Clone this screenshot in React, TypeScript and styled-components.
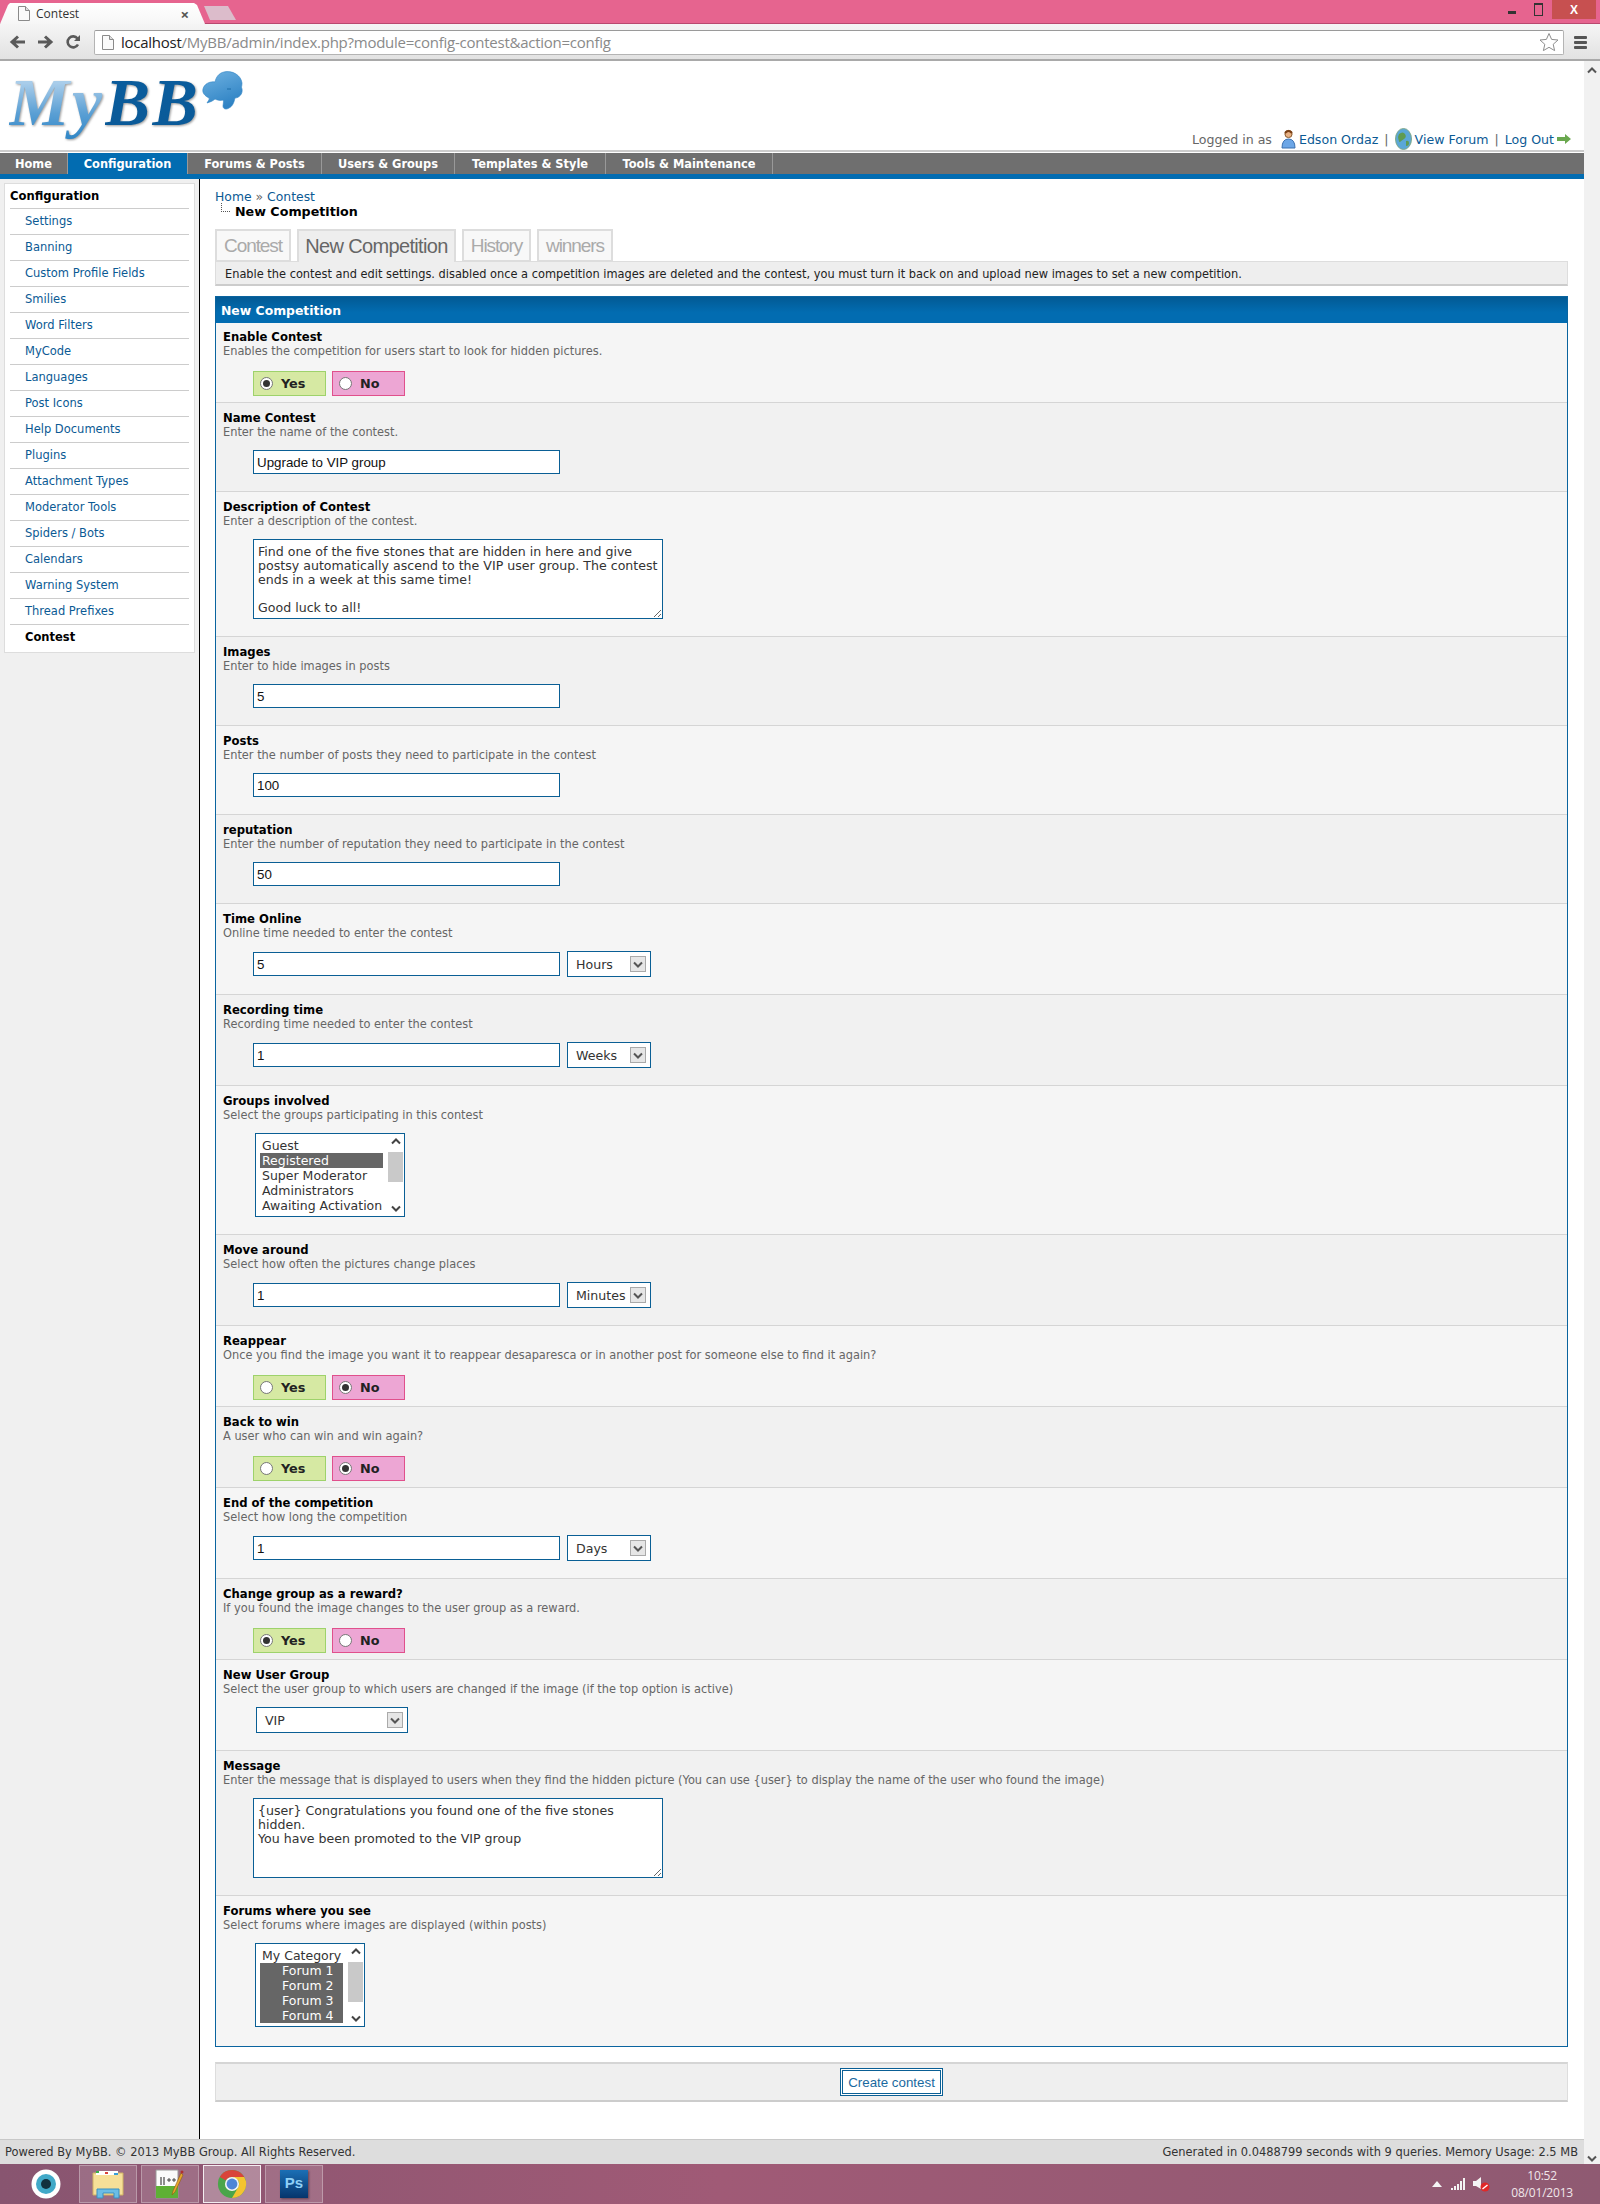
import React from 'react';
import styled, { createGlobalStyle } from 'styled-components';

const GlobalStyle = createGlobalStyle`
  html, body {
    margin: 0;
    padding: 0;
    height: 100%;
    overflow: hidden;
    background: #fff;
  }
  body {
    font-family: "DejaVu Sans", Verdana, sans-serif;
    font-size: 11.38px;
    color: #333;
  }
`;

const Screen = styled.div`
  width: 1600px;
  height: 2204px;
  display: flex;
  flex-direction: column;
  overflow: hidden;
`;

/* browser chrome */
const TitleBar = styled.div`
  height: 24px;
  flex: none;
  background: #e6648f;
  box-shadow: inset 0 -1px 0 #b9486f;
  display: flex;
  align-items: flex-end;
  justify-content: space-between;
`;

const TabStrip = styled.div`
  display: flex;
  align-items: flex-end;
`;

const BrowserTab = styled.div`
  width: 205px;
  height: 21px;
  box-sizing: border-box;
  background: linear-gradient(#fff, #f6f6f6);
  clip-path: polygon(0 100%, 8px 2px, 10px 0, 194px 0, 197px 2px, 205px 100%);
  padding: 0 16px 0 18px;
  display: flex;
  align-items: center;
  gap: 6px;
  font-family: "Open Sans", sans-serif;
  font-size: 12px;
  color: #333;
`;

const TabTitle = styled.span`
  flex: 1;
`;

const TabClose = styled.span`
  font-size: 15px;
  font-weight: 700;
  color: #555;
`;

const NewTabButton = styled.div`
  width: 32px;
  height: 14px;
  margin: 0 0 4px -1px;
  background: #dcbccb;
  clip-path: polygon(0 0, 24px 0, 32px 100%, 6px 100%);
`;

const WindowControls = styled.div`
  align-self: flex-start;
  display: flex;
  align-items: center;
  margin-right: 4px;
`;

const MinimizeMark = styled.span`
  width: 8px;
  height: 3px;
  background: #333;
  margin: 6px 18px 0 0;
`;

const RestoreMark = styled.span`
  width: 7px;
  height: 10px;
  border: 1px solid #333;
  border-top-width: 2px;
  margin-right: 9px;
`;

const CloseControl = styled.div`
  width: 44px;
  height: 19px;
  background: #c75050;
  color: #fff;
  font-family: "Liberation Sans", sans-serif;
  font-size: 12px;
  font-weight: 700;
  display: flex;
  align-items: center;
  justify-content: center;
`;

const Toolbar = styled.div`
  height: 37px;
  flex: none;
  box-sizing: border-box;
  background: linear-gradient(#f5f5f5, #e2e2e2);
  border-bottom: 2px solid #a9a9a9;
  display: flex;
  align-items: center;
  padding: 1px 9px 0 9px;
`;

const NavButtons = styled.div`
  width: 85px;
  display: flex;
  gap: 11px;
  align-items: center;
`;

const Omnibox = styled.div`
  width: 1470px;
  height: 25px;
  box-sizing: border-box;
  background: #fff;
  border: 1px solid #b4b4b4;
  border-top-color: #9a9a9a;
  border-radius: 2px;
  display: flex;
  align-items: center;
  padding: 0 4px 0 7px;
  gap: 7px;
  font-family: "Open Sans", sans-serif;
  font-size: 15px;
  letter-spacing: -0.25px;
  color: #8a8a8a;
`;

const Address = styled.span`
  flex: 1;
  white-space: nowrap;
`;

const Host = styled.span`
  color: #222;
`;

const Hamburger = styled.div`
  margin-left: 10px;
  width: 13px;
  display: flex;
  flex-direction: column;
  gap: 2px;
  span {
    height: 3px;
    background: #555;
    border-radius: 1px;
  }
`;

/* page */
const MainArea = styled.div`
  flex: 1;
  min-height: 0;
  display: flex;
`;

const Page = styled.div`
  flex: 1;
  min-width: 0;
  display: flex;
  flex-direction: column;
`;

const ScrollBar = styled.div`
  width: 16px;
  flex: none;
  background: #f1f1f1;
  display: flex;
  flex-direction: column;
  justify-content: space-between;
  align-items: center;
  padding: 6px 0 2px;
  color: #555;
`;

const Header = styled.div`
  height: 91px;
  flex: none;
  box-sizing: border-box;
  border-bottom: 2px solid #ccc;
  display: flex;
  justify-content: space-between;
  align-items: flex-end;
  padding: 0 13px 0 9px;
`;

const Logo = styled.div`
  align-self: flex-start;
  display: flex;
  align-items: flex-start;
`;

const LogoText = styled.div`
  font-family: "Liberation Serif", serif;
  font-style: italic;
  font-weight: 700;
  font-size: 68px;
  line-height: 68px;
  margin-top: 7px;
  letter-spacing: 2.5px;
  filter: drop-shadow(1px 1px 1px rgba(70, 70, 70, 0.55));
`;

const LogoPart = styled.span<{ $dark?: boolean }>`
  background: ${(p) =>
    p.$dark
      ? 'linear-gradient(#0a5c9c 30%, #0b5a98 90%)'
      : 'linear-gradient(#a9cdea 25%, #5a9fd4 65%, #2f86c6 100%)'};
  -webkit-background-clip: text;
  background-clip: text;
  color: transparent;
`;

const LogoBubble = styled.svg`
  margin: 10px 0 0 2px;
`;

const UserLinks = styled.div`
  display: flex;
  align-items: center;
  gap: 3px;
  font-size: 12.6px;
  height: 22px;
  color: #666;
  white-space: nowrap;
`;

const PlainLink = styled.a`
  color: #0b5a94;
  text-decoration: none;
`;

const LoggedAs = styled.span`
  margin-right: 6px;
`;

const Pipe = styled.span`
  margin: 0 3px;
`;

const NavBar = styled.div`
  flex: none;
  margin-top: 1px;
  height: 21px;
  background: #6f6f6f;
  border-bottom: 5px solid #026cb1;
  display: flex;
`;

const NavItem = styled.a<{ $active?: boolean; $width: number }>`
  width: ${(p) => p.$width}px;
  box-sizing: border-box;
  text-align: center;
  line-height: 23px;
  font-weight: 700;
  font-size: 11.4px;
  color: #fff;
  background: ${(p) => (p.$active ? '#026cb1' : 'transparent')};
  border-right: 1px solid #999;
`;

const Body = styled.div`
  flex: 1;
  min-height: 0;
  display: flex;
`;

const SideColumn = styled.div`
  width: 200px;
  flex: none;
  box-sizing: border-box;
  background: #f0f0f0;
  border-right: 1px solid #000;
  padding: 4px 4px 0;
  margin-right: 1px;
`;

const SideMenu = styled.div`
  background: #fff;
  border: 1px solid #ddd;
  padding: 0 5px 5px;
  height: 470px;
  box-sizing: border-box;
`;

const SideTitle = styled.div`
  height: 24px;
  line-height: 25px;
  font-size: 11.6px;
  font-weight: 700;
  color: #000;
  border-bottom: 1px solid #ccc;
`;

const SideItem = styled.div<{ $current?: boolean }>`
  height: 26px;
  box-sizing: border-box;
  line-height: 25px;
  font-size: 11.5px;
  padding-left: 15px;
  border-bottom: ${(p) => (p.$current ? '0' : '1px solid #ccc')};
  color: ${(p) => (p.$current ? '#000' : '#0b5a94')};
  font-weight: ${(p) => (p.$current ? 700 : 400)};
`;

const Content = styled.div`
  flex: 1;
  min-width: 0;
  padding: 11px 16px 0 14px;
`;

const Crumbs = styled.div`
  height: 14px;
  line-height: 14px;
  font-size: 12.4px;
  color: #666;
`;

const CrumbCurrent = styled.div`
  height: 15px;
  line-height: 16px;
  font-size: 12.7px;
  font-weight: 700;
  color: #000;
  padding-left: 20px;
  position: relative;
  &::before {
    content: '';
    position: absolute;
    left: 6px;
    top: -1px;
    width: 8px;
    height: 8px;
    border-left: 1px dotted #555;
    border-bottom: 1px dotted #555;
  }
`;

const Tabs = styled.div`
  display: flex;
  gap: 6px;
  margin-top: 10px;
  height: 33px;
`;

const TabLink = styled.div<{ $active?: boolean; $width: number }>`
  width: ${(p) => p.$width}px;
  box-sizing: border-box;
  text-align: center;
  background: ${(p) => (p.$active ? '#eee' : '#f8f8f8')};
  border: 2px solid #ddd;
  border-bottom: ${(p) => (p.$active ? '0' : '2px solid #ddd')};
  font-family: "Liberation Sans", sans-serif;
  font-size: ${(p) => (p.$active ? 20 : 19)}px;
  letter-spacing: ${(p) => (p.$active ? -0.65 : -1.1)}px;
  line-height: 30px;
  color: ${(p) => (p.$active ? '#666' : '#aaa')};
  position: relative;
  z-index: 1;
`;

const TabDescription = styled.div`
  height: 25px;
  box-sizing: border-box;
  background: #eee;
  border: 1px solid #ddd;
  border-bottom: 2px solid #ccc;
  margin-top: -1px;
  padding-left: 9px;
  line-height: 24px;
  color: #222;
`;

const Panel = styled.div`
  margin-top: 10px;
  border: 1px solid #0a649f;
  background: #f5f5f5;
`;

const PanelHead = styled.div`
  height: 26px;
  background: linear-gradient(#025a94, #026cb1 60%);
  color: #fff;
  font-weight: 700;
  font-size: 12.4px;
  line-height: 27px;
  padding-left: 5px;
`;

const Row = styled.div<{ $alt: boolean; $first?: boolean; $last?: boolean }>`
  box-sizing: border-box;
  padding: ${(p) => (p.$first ? 7 : 8)}px 7px 0;
  background: ${(p) => (p.$alt ? '#f1f1f1' : '#f5f5f5')};
  border-bottom: ${(p) => (p.$last ? '0' : '1px solid #d5d5d5')};
`;

const Label = styled.div`
  font-weight: 700;
  font-size: 11.65px;
  line-height: 14px;
  color: #000;
`;

const Hint = styled.div`
  line-height: 14px;
  color: #666;
`;

const FieldRow = styled.div<{ $radio?: boolean; $last?: boolean }>`
  display: flex;
  align-items: center;
  gap: ${(p) => (p.$radio ? 6 : 7)}px;
  margin-top: ${(p) => (p.$radio ? 13 : 11)}px;
  padding-bottom: ${(p) => (p.$radio ? 6 : p.$last ? 19 : 17)}px;
  margin-left: 30px;
`;

const TextInput = styled.input`
  width: 307px;
  height: 24px;
  box-sizing: border-box;
  border: 1px solid #0a5f95;
  outline: 0;
  padding: 0 3px;
  background: #fff;
  font-family: "Liberation Sans", Arial, sans-serif;
  font-size: 13.33px;
  color: #111;
`;

const TextArea = styled.textarea`
  display: block;
  width: 410px;
  height: 80px;
  box-sizing: border-box;
  border: 1px solid #0a5f95;
  outline: 0;
  padding: 5px 4px 3px;
  margin: 0;
  background: #fff;
  font-family: "DejaVu Sans", Verdana, sans-serif;
  font-size: 12.6px;
  line-height: 14px;
  color: #333;
  overflow: hidden;
  resize: both;
`;

const SelectBox = styled.div<{ $width: number }>`
  width: ${(p) => p.$width}px;
  height: 26px;
  box-sizing: border-box;
  background: #fff;
  border: 1px solid #0a5f95;
  display: flex;
  align-items: center;
  justify-content: space-between;
  padding: 0 4px 0 8px;
  font-size: 12.6px;
  color: #333;
`;

const SelectArrow = styled.span`
  width: 16px;
  height: 16px;
  box-sizing: border-box;
  background: #e6e6e6;
  border: 1px solid #aaa;
  display: flex;
  align-items: center;
  justify-content: center;
  color: #555;
`;

const RadioChoice = styled.label<{ $yes?: boolean }>`
  width: 73px;
  height: 25px;
  box-sizing: border-box;
  background: ${(p) => (p.$yes ? '#d6e9a3' : '#eda6d4')};
  border: 1px solid ${(p) => (p.$yes ? '#9ed26b' : '#e0508c')};
  display: flex;
  align-items: center;
  padding-left: 6px;
  gap: 8px;
  font-size: 12.8px;
  font-weight: 700;
  color: #222;
`;

const RadioDot = styled.span<{ $on?: boolean }>`
  width: 13px;
  height: 13px;
  box-sizing: border-box;
  border-radius: 50%;
  border: 1px solid #777;
  background: #fff;
  display: flex;
  align-items: center;
  justify-content: center;
  &::after {
    content: '';
    width: 7px;
    height: 7px;
    border-radius: 50%;
    background: ${(p) => (p.$on ? '#333' : 'transparent')};
  }
`;

const ListBox = styled.div<{ $width: number }>`
  width: ${(p) => p.$width}px;
  height: 84px;
  box-sizing: border-box;
  margin-left: 2px;
  background: #fff;
  border: 1px solid #0a5f95;
  display: flex;
  padding: 4px 1px 4px 4px;
`;

const ListOptions = styled.div`
  flex: 1;
  margin-right: 5px;
`;

const ListOption = styled.div<{ $selected?: boolean; $indent?: boolean }>`
  height: 15px;
  line-height: 15px;
  font-size: 12.5px;
  white-space: nowrap;
  overflow: hidden;
  padding-left: ${(p) => (p.$indent ? 22 : 2)}px;
  background: ${(p) => (p.$selected ? '#666' : 'transparent')};
  color: ${(p) => (p.$selected ? '#fff' : '#333')};
`;

const ListScroll = styled.div`
  width: 15px;
  margin: -3px 0 -3px;
  background: #fff;
  display: flex;
  flex-direction: column;
  align-items: center;
  justify-content: space-between;
  position: relative;
  color: #444;
  padding: 3px 0;
`;

const ListThumb = styled.div<{ $height: number }>`
  position: absolute;
  left: 0;
  right: 0;
  top: 17px;
  height: ${(p) => p.$height}px;
  background: #c9c9c9;
`;

const FormButtons = styled.div`
  margin-top: 15px;
  height: 40px;
  box-sizing: border-box;
  background: #efefef;
  border: 1px solid #ddd;
  border-top: 2px solid #d5d5d5;
  border-bottom: 2px solid #ccc;
  display: flex;
  align-items: center;
  justify-content: center;
`;

const SubmitButton = styled.button`
  width: 103px;
  height: 28px;
  padding: 0;
  background: #fff;
  border: 1px solid #0a5f95;
  box-shadow: inset 0 0 0 1px #fff, inset 0 0 0 2px #0a5f95;
  font-family: "Liberation Sans", Arial, sans-serif;
  font-size: 13.33px;
  color: #1a6aa0;
`;

const Footer = styled.div`
  height: 25px;
  flex: none;
  box-sizing: border-box;
  background: #ddd;
  border-top: 1px solid #c8c8c8;
  display: flex;
  justify-content: space-between;
  align-items: center;
  padding: 0 6px 0 5px;
  font-size: 11.45px;
  color: #333;
`;

/* taskbar */
const TaskBar = styled.div`
  height: 40px;
  flex: none;
  background: linear-gradient(90deg, #885570, #a05a76 45%, #8f5a72);
  display: flex;
  align-items: center;
  justify-content: space-between;
  padding-right: 27px;
`;

const TaskIcons = styled.div`
  display: flex;
  gap: 4px;
  align-items: center;
`;

const StartOrb = styled.div`
  width: 75px;
  display: flex;
  justify-content: center;
  padding-left: 17px;
  box-sizing: border-box;
`;

const TaskSlot = styled.div<{ $active?: boolean }>`
  width: 58px;
  height: 38px;
  box-sizing: border-box;
  background: ${(p) => (p.$active ? 'rgba(255,255,255,.3)' : 'rgba(255,255,255,.14)')};
  border: 1px solid ${(p) => (p.$active ? 'rgba(255,255,255,.85)' : 'rgba(255,255,255,.3)')};
  display: flex;
  align-items: center;
  justify-content: center;
`;

const PsBadge = styled.div`
  width: 28px;
  height: 28px;
  background: linear-gradient(#1b6fb5, #06356c);
  color: #8fd0f7;
  font-family: "Liberation Sans", sans-serif;
  font-weight: 700;
  font-size: 15px;
  line-height: 26px;
  text-align: center;
  box-shadow: 1px 1px 2px rgba(0, 0, 0, 0.4);
`;

const Tray = styled.div`
  display: flex;
  align-items: center;
  gap: 6px;
`;

const TrayArrow = styled.svg`
  margin-right: 3px;
`;

const Clock = styled.div`
  margin-left: 14px;
  text-align: center;
  font-family: "Open Sans", sans-serif;
  font-size: 12px;
  line-height: 17px;
  color: #f0e6ea;
  letter-spacing: -0.2px;
`;

const DownChevron = () => (
  <svg width="10" height="7" viewBox="0 0 10 7">
    <path d="M1 1.5 5 5.5 9 1.5" fill="none" stroke="currentColor" strokeWidth="2" />
  </svg>
);

const UpChevron = () => (
  <svg width="10" height="7" viewBox="0 0 10 7">
    <path d="M1 5.5 5 1.5 9 5.5" fill="none" stroke="currentColor" strokeWidth="2" />
  </svg>
);

const ArrowIcon = ({ flip }: { flip?: boolean }) => (
  <svg width="17" height="16" viewBox="0 0 17 16" style={flip ? { transform: 'scaleX(-1)' } : undefined}>
    <path d="M1 8h12M8 2.5 14 8l-6 5.5" fill="none" stroke="#5a5a5a" strokeWidth="3" />
  </svg>
);

const ReloadIcon = () => (
  <svg width="16" height="16" viewBox="0 0 16 16">
    <path d="M13 10.5A5.5 5.5 0 1 1 12.5 4.5" fill="none" stroke="#5a5a5a" strokeWidth="2.6" />
    <path d="M15 1v6H9z" fill="#5a5a5a" />
  </svg>
);

const PageIcon = () => (
  <svg width="12" height="15" viewBox="0 0 12 15">
    <path d="M.5.5h7l4 4v10H.5z" fill="#fafafa" stroke="#8a8a8a" />
    <path d="M7.5.5v4h4" fill="#ddd" stroke="#8a8a8a" />
  </svg>
);

const StarIcon = () => (
  <svg width="20" height="20" viewBox="0 0 20 20">
    <path d="M10 1.5 12.6 7.4l6.4.6-4.8 4.3 1.4 6.3L10 15.3 4.4 18.6l1.4-6.3L1 8l6.4-.6z" fill="#fff" stroke="#8d8d8d" />
  </svg>
);

const UserIcon = () => (
  <svg width="15" height="20" viewBox="0 0 15 20">
    <circle cx="7.5" cy="5" r="3.6" fill="#e8b184" stroke="#8a5a2b" />
    <path d="M4 4q3.500-4 7 0" fill="none" stroke="#7a3f14" strokeWidth="2" />
    <path d="M1 19q0-9 6.500-9t6.500 9z" fill="#6ca6e6" stroke="#3b70b0" />
  </svg>
);

const GlobeIcon = () => (
  <svg width="17" height="22" viewBox="0 0 17 22">
    <ellipse cx="8.500" cy="11" rx="8" ry="10.500" fill="#5aa7d8" stroke="#7fa98a" />
    <path d="M4 6q4-3 6 0t-1 5-4 3-2-5zM11 13q3-1 3 2t-3 3z" fill="#5f9b52" />
  </svg>
);

const GreenArrow = () => (
  <svg width="14" height="10" viewBox="0 0 14 10">
    <path d="M0 3h8V0l6 5-6 5V7H0z" fill="#6aa84f" />
  </svg>
);

const Bubble = () => (
  <LogoBubble width="42" height="40" viewBox="0 0 42 40">
    <defs>
      <linearGradient id="bubbleFill" x1="0" y1="0" x2="0.4" y2="1">
        <stop offset="0" stopColor="#6fb2e2" />
        <stop offset="1" stopColor="#2f83c4" />
      </linearGradient>
    </defs>
    <path
      d="M22 1c8-2 17 3 18 11 0 3-1 4 0 6 1 5-3 9-7 9-1 4-2 8-6 10-3 2-6 1-6-2 0-2 1-4 0-6-3 1-6 0-8-1-2 2-5 3-8 4 1-2 3-4 2-5C3 25 0 22 1 18c1-5 7-8 12-7 1-5 4-9 9-10z"
      fill="url(#bubbleFill)"
      stroke="#2f83c4"
      strokeWidth=".6"
    />
    <path d="M25 18h4" fill="none" stroke="#1d6ca8" strokeWidth="1" />
  </LogoBubble>
);

const ChromeIcon = () => (
  <svg width="30" height="30" viewBox="0 0 32 32">
    <circle cx="16" cy="16" r="15" fill="#4aa54a" />
    <path d="M3 8.500A15 15 0 0 1 29 8.500H16a7.500 7.500 0 0 0-6.500 3.800z" fill="#d9443a" />
    <path d="M29 8.500A15 15 0 0 1 16 31l6.500-11.300A7.500 7.500 0 0 0 22.500 12L16 8.500z" fill="#f4c430" />
    <circle cx="16" cy="16" r="7.500" fill="#f4f4f4" />
    <circle cx="16" cy="16" r="5.800" fill="#4d86d6" />
  </svg>
);

const FolderIcon = () => (
  <svg width="32" height="30" viewBox="0 0 32 30">
    <path d="M1 4h30v22H1z" fill="#f6df98" stroke="#cfb265" />
    <path d="M4 2h22v4H4z" fill="#fff" />
    <path d="M4 2h3v2H4z" fill="#38b44a" />
    <path d="M13 3h3v2h-3z" fill="#d9443a" />
    <path d="M22 4h4v2h-4z" fill="#3a9fd8" />
    <path d="M5 20h22v9h-5v-5H11v5H5z" fill="#6bbde6" stroke="#3a8fc0" />
  </svg>
);

const NotepadIcon = () => (
  <svg width="30" height="30" viewBox="0 0 30 30">
    <path d="M1 1h22v28H1z" fill="#fbfbfb" stroke="#999" />
    <path d="M1 17h22v12H1z" fill="#5eb035" />
    <path d="M6 8v8M9 8v8" stroke="#222" fill="none" />
    <path d="M12 11h4M14 9v4M17 11h4M19 9v4" stroke="#222" fill="none" strokeWidth=".8" />
    <path d="M26 4 18 22l-1 4 3-3 8-17z" fill="#e8a52c" stroke="#8a5a14" strokeWidth=".6" />
    <circle cx="27" cy="3" r="1.500" fill="#b03030" />
  </svg>
);

const EyeOrb = () => (
  <svg width="30" height="30" viewBox="0 0 30 30">
    <circle cx="15" cy="15" r="14.500" fill="#fff" />
    <circle cx="15" cy="15" r="10" fill="#41a9c8" />
    <circle cx="15" cy="15" r="5" fill="#12313f" />
  </svg>
);

const SignalIcon = () => (
  <svg width="16" height="12" viewBox="0 0 16 12">
    <path d="M0 10h2v2H0zM3 8h2v4H3zM6 6h2v6H6zM9 3h2v9H9zM12 0h2v12h-2z" fill="#f4f4f4" />
  </svg>
);

const SpeakerIcon = () => (
  <svg width="18" height="16" viewBox="0 0 18 16">
    <path d="M0 5h3l5-4v12l-5-3H0z" fill="#f4f4f4" />
    <circle cx="12" cy="11" r="4.500" fill="#e02828" />
    <path d="M9.500 13 14.500 9" stroke="#fff" strokeWidth="1.500" />
  </svg>
);

const Choice = ({ value }: { value: boolean }) => (
  <>
    <RadioChoice $yes>
      <RadioDot $on={value} />
      Yes
    </RadioChoice>
    <RadioChoice>
      <RadioDot $on={!value} />
      No
    </RadioChoice>
  </>
);

const Select = ({ text, width }: { text: string; width: number }) => (
  <SelectBox $width={width}>
    {text}
    <SelectArrow>
      <DownChevron />
    </SelectArrow>
  </SelectBox>
);

type Option = { text: string; selected?: boolean; indent?: boolean };

const List = ({ options, width, thumb }: { options: Option[]; width: number; thumb: number }) => (
  <ListBox $width={width}>
    <ListOptions>
      {options.map((o) => (
        <ListOption key={o.text} $selected={o.selected} $indent={o.indent}>
          {o.text}
        </ListOption>
      ))}
    </ListOptions>
    <ListScroll>
      <UpChevron />
      <ListThumb $height={thumb} />
      <DownChevron />
    </ListScroll>
  </ListBox>
);

const navItems = [
  { text: 'Home', width: 68 },
  { text: 'Configuration', width: 120, active: true },
  { text: 'Forums & Posts', width: 134 },
  { text: 'Users & Groups', width: 133 },
  { text: 'Templates & Style', width: 151 },
  { text: 'Tools & Maintenance', width: 167 },
];

const sideItems = [
  'Settings',
  'Banning',
  'Custom Profile Fields',
  'Smilies',
  'Word Filters',
  'MyCode',
  'Languages',
  'Post Icons',
  'Help Documents',
  'Plugins',
  'Attachment Types',
  'Moderator Tools',
  'Spiders / Bots',
  'Calendars',
  'Warning System',
  'Thread Prefixes',
];

const tabs = [
  { text: 'Contest', width: 76 },
  { text: 'New Competition', width: 159, active: true },
  { text: 'History', width: 69 },
  { text: 'winners', width: 76 },
];

const textField = (value: string) => <TextInput defaultValue={value} />;

const withUnit = (value: string, unit: string) => (
  <>
    <TextInput defaultValue={value} />
    <Select text={unit} width={84} />
  </>
);

const SelectIndent = styled.div`
  margin-left: 3px;
`;

const rows: { label: string; hint: string; radio?: boolean; field: React.ReactNode }[] = [
  {
    label: 'Enable Contest',
    hint: 'Enables the competition for users start to look for hidden pictures.',
    radio: true,
    field: <Choice value={true} />,
  },
  { label: 'Name Contest', hint: 'Enter the name of the contest.', field: textField('Upgrade to VIP group') },
  {
    label: 'Description of Contest',
    hint: 'Enter a description of the contest.',
    field: (
      <TextArea
        wrap="off"
        defaultValue={
          'Find one of the five stones that are hidden in here and give\npostsy automatically ascend to the VIP user group. The contest\nends in a week at this same time!\n\nGood luck to all!'
        }
      />
    ),
  },
  { label: 'Images', hint: 'Enter to hide images in posts', field: textField('5') },
  { label: 'Posts', hint: 'Enter the number of posts they need to participate in the contest', field: textField('100') },
  {
    label: 'reputation',
    hint: 'Enter the number of reputation they need to participate in the contest',
    field: textField('50'),
  },
  { label: 'Time Online', hint: 'Online time needed to enter the contest', field: withUnit('5', 'Hours') },
  { label: 'Recording time', hint: 'Recording time needed to enter the contest', field: withUnit('1', 'Weeks') },
  {
    label: 'Groups involved',
    hint: 'Select the groups participating in this contest',
    field: (
      <List
        width={150}
        thumb={30}
        options={[
          { text: 'Guest' },
          { text: 'Registered', selected: true },
          { text: 'Super Moderator' },
          { text: 'Administrators' },
          { text: 'Awaiting Activation' },
        ]}
      />
    ),
  },
  { label: 'Move around', hint: 'Select how often the pictures change places', field: withUnit('1', 'Minutes') },
  {
    label: 'Reappear',
    hint: 'Once you find the image you want it to reappear desaparesca or in another post for someone else to find it again?',
    radio: true,
    field: <Choice value={false} />,
  },
  { label: 'Back to win', hint: 'A user who can win and win again?', radio: true, field: <Choice value={false} /> },
  { label: 'End of the competition', hint: 'Select how long the competition', field: withUnit('1', 'Days') },
  {
    label: 'Change group as a reward?',
    hint: 'If you found the image changes to the user group as a reward.',
    radio: true,
    field: <Choice value={true} />,
  },
  {
    label: 'New User Group',
    hint: 'Select the user group to which users are changed if the image (if the top option is active)',
    field: (
      <SelectIndent>
        <Select text="VIP" width={152} />
      </SelectIndent>
    ),
  },
  {
    label: 'Message',
    hint: 'Enter the message that is displayed to users when they find the hidden picture (You can use {user} to display the name of the user who found the image)',
    field: (
      <TextArea
        wrap="off"
        defaultValue={
          '{user} Congratulations you found one of the five stones\nhidden.\nYou have been promoted to the VIP group'
        }
      />
    ),
  },
  {
    label: 'Forums where you see',
    hint: 'Select forums where images are displayed (within posts)',
    field: (
      <List
        width={110}
        thumb={40}
        options={[
          { text: 'My Category' },
          { text: 'Forum 1', selected: true, indent: true },
          { text: 'Forum 2', selected: true, indent: true },
          { text: 'Forum 3', selected: true, indent: true },
          { text: 'Forum 4', selected: true, indent: true },
        ]}
      />
    ),
  },
];

const App = () => {
  return (
    <Screen>
      <GlobalStyle />
      <TitleBar>
        <TabStrip>
          <BrowserTab>
            <PageIcon />
            <TabTitle>Contest</TabTitle>
            <TabClose>×</TabClose>
          </BrowserTab>
          <NewTabButton />
        </TabStrip>
        <WindowControls>
          <MinimizeMark />
          <RestoreMark />
          <CloseControl>X</CloseControl>
        </WindowControls>
      </TitleBar>
      <Toolbar>
        <NavButtons>
          <ArrowIcon flip />
          <ArrowIcon />
          <ReloadIcon />
        </NavButtons>
        <Omnibox>
          <PageIcon />
          <Address>
            <Host>localhost</Host>/MyBB/admin/index.php?module=config-contest&amp;action=config
          </Address>
          <StarIcon />
        </Omnibox>
        <Hamburger>
          <span />
          <span />
          <span />
        </Hamburger>
      </Toolbar>
      <MainArea>
        <Page>
          <Header>
            <Logo>
              <LogoText>
                <LogoPart>My</LogoPart>
                <LogoPart $dark>BB</LogoPart>
              </LogoText>
              <Bubble />
            </Logo>
            <UserLinks>
              <LoggedAs>Logged in as</LoggedAs>
              <UserIcon />
              <PlainLink>Edson Ordaz</PlainLink>
              <Pipe>|</Pipe>
              <GlobeIcon />
              <PlainLink>View Forum</PlainLink>
              <Pipe>|</Pipe>
              <PlainLink>Log Out</PlainLink>
              <GreenArrow />
            </UserLinks>
          </Header>
          <NavBar>
            {navItems.map((n) => (
              <NavItem key={n.text} $active={n.active} $width={n.width}>
                {n.text}
              </NavItem>
            ))}
          </NavBar>
          <Body>
            <SideColumn>
              <SideMenu>
                <SideTitle>Configuration</SideTitle>
                {sideItems.map((s) => (
                  <SideItem key={s}>{s}</SideItem>
                ))}
                <SideItem $current>Contest</SideItem>
              </SideMenu>
            </SideColumn>
            <Content>
              <Crumbs>
                <PlainLink>Home</PlainLink> » <PlainLink>Contest</PlainLink>
              </Crumbs>
              <CrumbCurrent>New Competition</CrumbCurrent>
              <Tabs>
                {tabs.map((t) => (
                  <TabLink key={t.text} $active={t.active} $width={t.width}>
                    {t.text}
                  </TabLink>
                ))}
              </Tabs>
              <TabDescription>
                Enable the contest and edit settings. disabled once a competition images are deleted and the contest, you
                must turn it back on and upload new images to set a new competition.
              </TabDescription>
              <Panel>
                <PanelHead>New Competition</PanelHead>
                {rows.map((r, i) => (
                  <Row key={r.label} $alt={i % 2 === 1} $first={i === 0} $last={i === rows.length - 1}>
                    <Label>{r.label}</Label>
                    <Hint>{r.hint}</Hint>
                    <FieldRow $radio={r.radio} $last={i === rows.length - 1}>
                      {r.field}
                    </FieldRow>
                  </Row>
                ))}
              </Panel>
              <FormButtons>
                <SubmitButton>Create contest</SubmitButton>
              </FormButtons>
            </Content>
          </Body>
          <Footer>
            <span>Powered By MyBB. © 2013 MyBB Group. All Rights Reserved.</span>
            <span>Generated in 0.0488799 seconds with 9 queries. Memory Usage: 2.5 MB</span>
          </Footer>
        </Page>
        <ScrollBar>
          <UpChevron />
          <DownChevron />
        </ScrollBar>
      </MainArea>
      <TaskBar>
        <TaskIcons>
          <StartOrb>
            <EyeOrb />
          </StartOrb>
          <TaskSlot>
            <FolderIcon />
          </TaskSlot>
          <TaskSlot>
            <NotepadIcon />
          </TaskSlot>
          <TaskSlot $active>
            <ChromeIcon />
          </TaskSlot>
          <TaskSlot>
            <PsBadge>Ps</PsBadge>
          </TaskSlot>
        </TaskIcons>
        <Tray>
          <TrayArrow width="10" height="6" viewBox="0 0 10 6">
            <path d="M5 0 10 6H0z" fill="#f4f4f4" />
          </TrayArrow>
          <SignalIcon />
          <SpeakerIcon />
          <Clock>
            10:52
            <br />
            08/01/2013
          </Clock>
        </Tray>
      </TaskBar>
    </Screen>
  );
};

export default App;
